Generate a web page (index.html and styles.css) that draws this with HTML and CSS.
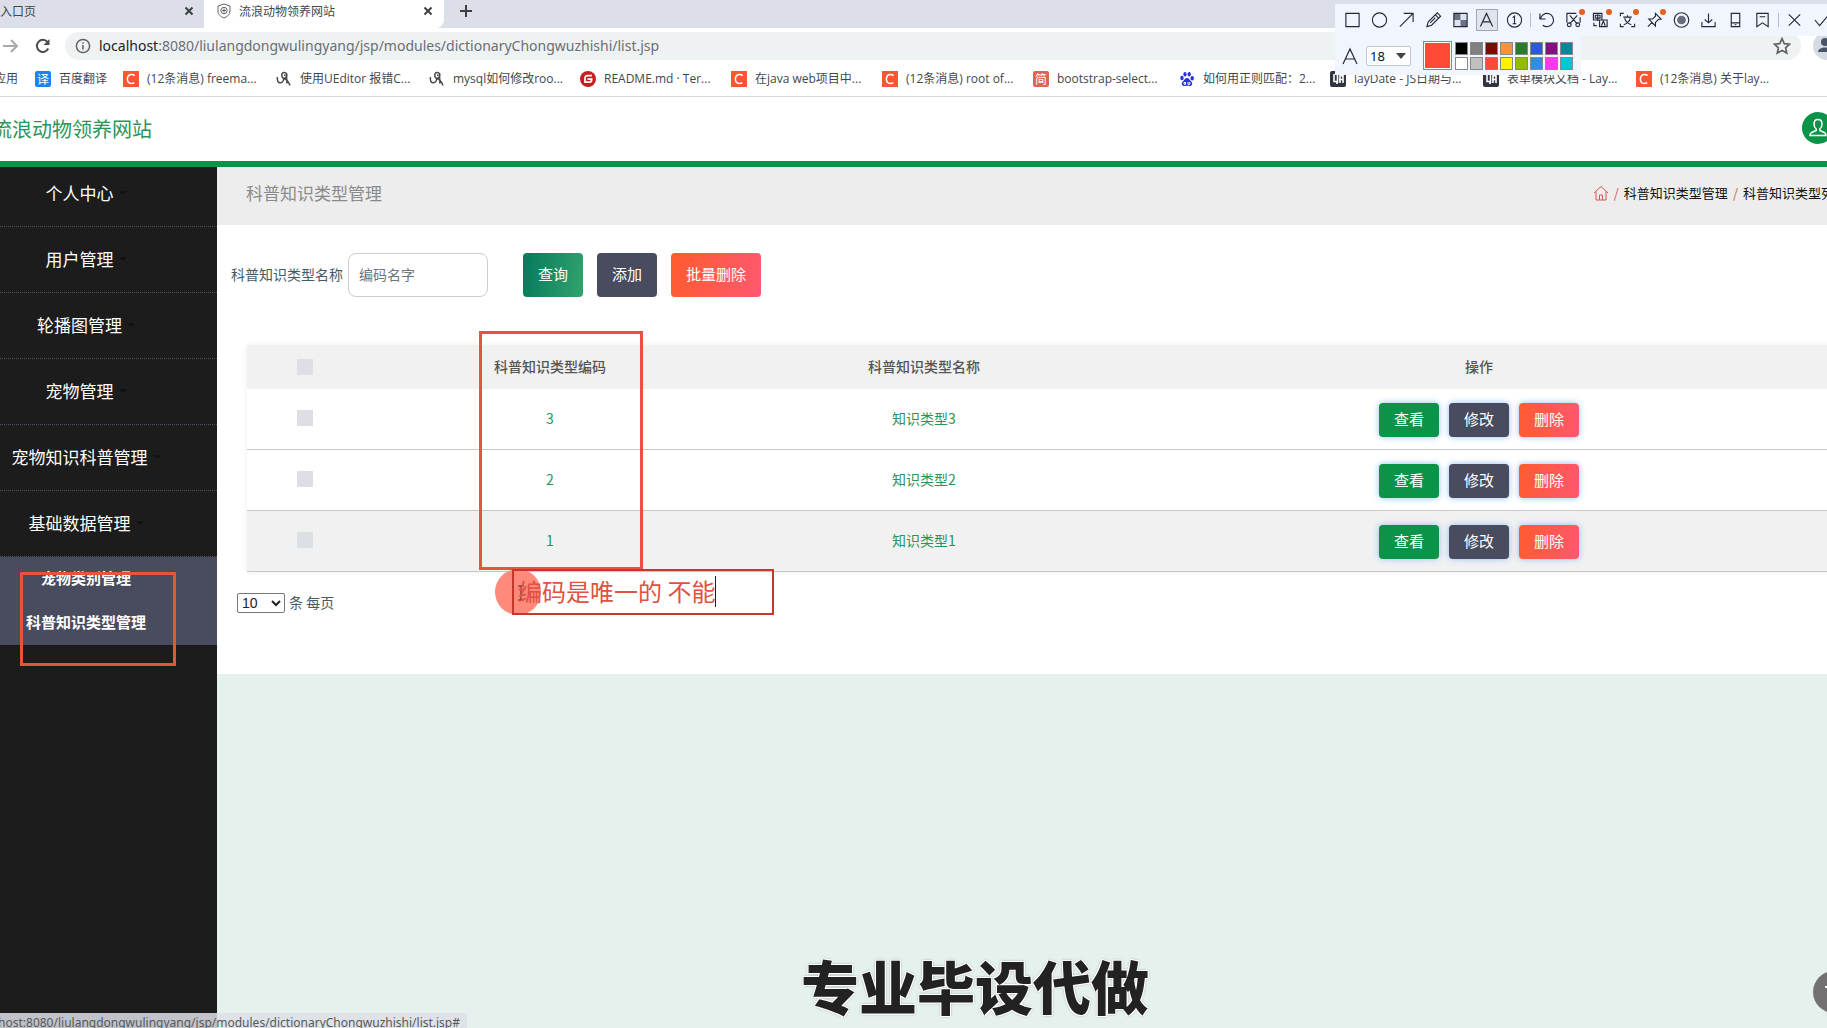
FILE: index.html
```html
<!DOCTYPE html>
<html lang="zh-CN">
<head>
<meta charset="utf-8">
<title>流浪动物领养网站</title>
<link rel="stylesheet" href="styles.css">
</head>
<body>
<svg class="defs" aria-hidden="true">
  <symbol id="csdn" viewBox="0 0 16 16"><rect width="16" height="16" fill="#fc5531"/><path d="M11.6 4.600C10.700 3.800 9.700 3.500 8.600 3.500 6 3.500 4.500 5.500 4.400 8.100c0 2.700 1.300 4.400 3.800 4.400 1.200 0 2.200-.3 3.100-.9" fill="none" stroke="#fff" stroke-width="1.500"/></symbol>
  <symbol id="cat" viewBox="0 0 16 16"><path d="M1.500 6c-.8 3.500.6 6 3 5.800 2.300-.2 3-1.800 3.200-4M7.300 7.500C5 6 5.200 1.800 8 1.500c2.600-.2 3.400 2 2.600 3.700-.5 1.200-1.800 2-3.300 2.300 3 .2 5 2.500 6.700 7M10.500 3l.4 9.500M8 4.200h1.500" fill="none" stroke="#4a4a4a" stroke-width="1.500"/></symbol>
  <symbol id="lay" viewBox="0 0 16 16"><rect width="16" height="16" rx="2" fill="#2f3440"/><path d="M4 3v7.500h3V13M7.500 4v8M10 12V5l3-.5V12M9 8.500h4" fill="none" stroke="#fff" stroke-width="1.600"/></symbol>
</svg>

<div class="tabs">
  <div class="tab tab-old"><span>入口页</span>
    <button class="x" aria-label="关闭标签页"><svg viewBox="0 0 10 10"><path d="M1.500 1.500l7 7M8.500 1.500l-7 7"/></svg></button></div>
  <div class="tab tab-on">
    <svg class="fav" viewBox="0 0 16 16"><path d="M8 1l6 2v5c0 3.500-2.500 5.500-6 7-3.500-1.500-6-3.500-6-7V3z"/><circle cx="8" cy="7.500" r="3.200"/><path d="M8 5.500v4M6 7.500h4"/></svg>
    <span>流浪动物领养网站</span>
    <button class="x" aria-label="关闭标签页"><svg viewBox="0 0 10 10"><path d="M1.500 1.500l7 7M8.500 1.500l-7 7"/></svg></button></div>
  <button class="plus" aria-label="新标签页"><svg viewBox="0 0 14 14"><path d="M7 1v12M1 7h12"/></svg></button>
</div>

<div class="address">
  <svg class="fwd" viewBox="0 0 16 16"><path d="M0 8h14M8 2l6 6-6 6"/></svg>
  <button class="reload" aria-label="重新加载"><svg viewBox="0 0 16 16"><path d="M13.300 10.500A6 6 0 1 1 12.500 4" fill="none" stroke="#4a4d51" stroke-width="2"/><path d="M14.500 1v6h-6z" fill="#4a4d51"/></svg></button>
  <div class="omni">
    <svg class="info" viewBox="0 0 16 16"><circle cx="8" cy="8" r="6.600"/><path d="M8 7v4.500M8 4.200v1.600"/></svg>
    <span><b>localhost</b>:8080/liulangdongwulingyang/jsp/modules/dictionaryChongwuzhishi/list.jsp</span>
    <svg class="star" viewBox="0 0 16 16"><path d="M8 1.500l2 4.400 4.700.5-3.500 3.200 1 4.700L8 11.900l-4.200 2.400 1-4.700L1.300 6.400 6 5.900z"/></svg>
  </div>
  <svg class="me" viewBox="0 0 28 28"><circle cx="14" cy="14" r="14" fill="#d6dae3"/><circle cx="12" cy="10" r="4" fill="#4a5568"/><path d="M5 20c0-6 14-6 14 0z" fill="#4a5568"/></svg>
</div>

<nav class="marks">
  <a class="m-app" href="#">应用</a>
  <a class="m-tr" href="#"><svg viewBox="0 0 16 16"><rect width="16" height="16" rx="2" fill="#1a84ee"/><text x="8" y="12.500" text-anchor="middle" font-size="12" fill="#fff">译</text></svg>百度翻译</a>
  <a class="wide" href="#"><svg><use href="#csdn"/></svg>(12条消息) freema...</a>
  <a class="wide" href="#"><svg><use href="#cat"/></svg>使用UEditor 报错C...</a>
  <a href="#"><svg><use href="#cat"/></svg>mysql如何修改roo...</a>
  <a href="#"><svg viewBox="0 0 16 16"><circle cx="8" cy="8" r="8" fill="#c71d23"/><path d="M12 4.700H7.500Q5 4.700 5 7.200v4h4.500q2.200 0 2.200-3H7.500" fill="none" stroke="#fff" stroke-width="1.700"/></svg>README.md · Ter...</a>
  <a href="#"><svg><use href="#csdn"/></svg>在java web项目中...</a>
  <a href="#"><svg><use href="#csdn"/></svg>(12条消息) root of...</a>
  <a class="narrow" href="#"><svg viewBox="0 0 16 16"><rect width="16" height="16" rx="2" fill="#e0654d"/><text x="8" y="12.500" text-anchor="middle" font-size="12" fill="#fff">简</text></svg>bootstrap-select...</a>
  <a href="#"><svg viewBox="0 0 16 16" fill="#2932e1"><ellipse cx="3" cy="7" rx="1.700" ry="2.200"/><ellipse cx="6" cy="3.200" rx="1.600" ry="2.300"/><ellipse cx="10.200" cy="3.200" rx="1.600" ry="2.300"/><ellipse cx="13.200" cy="7.200" rx="1.700" ry="2.200"/><path d="M8 7c2 0 2.800 2.200 4.200 3.500 2 2 .8 4.800-1.700 4.500-1.700-.3-3.300-.3-5 0-2.600.3-3.700-2.600-1.700-4.500C5.200 9.200 6 7 8 7z"/><path d="M6.500 11v2.300H5V11.500h1.500M9 11v2.300h1.800V11" fill="none" stroke="#fff"/></svg>如何用正则匹配：2...</a>
  <a class="wide" href="#"><svg><use href="#lay"/></svg>layDate - JS日期与...</a>
  <a class="wide" href="#"><svg><use href="#lay"/></svg>表单模块文档 - Lay...</a>
  <a href="#"><svg><use href="#csdn"/></svg>(12条消息) 关于lay...</a>
</nav>

<header class="site">
  <a class="brand" href="#">流浪动物领养网站</a>
  <button class="user" aria-label="用户"><svg viewBox="0 0 32 32"><path d="M16 7.500c-3 0-4 2-4 4.500 0 2 .8 4 2.200 5v1.500l-5 2.300c-1 .5-1.200 1.500-1.200 2.700h16c0-1.200-.2-2.200-1.200-2.700l-5-2.300V17c1.400-1 2.200-3 2.200-5 0-2.500-1-4.500-4-4.500z"/></svg></button>
</header>

<div class="app">
  <aside class="side">
    <ul class="menu">
      <li><a href="#">个人中心</a></li>
      <li><a href="#">用户管理</a></li>
      <li><a href="#">轮播图管理</a></li>
      <li><a href="#">宠物管理</a></li>
      <li><a href="#">宠物知识科普管理</a></li>
      <li><a href="#">基础数据管理</a></li>
    </ul>
    <ul class="sub">
      <li><a href="#">宠物类别管理</a></li>
      <li><a href="#">科普知识类型管理</a></li>
    </ul>
  </aside>

  <main class="main">
    <div class="crumbs">
      <h1>科普知识类型管理</h1>
      <div class="path">
        <svg viewBox="0 0 16 16"><path d="M1 8l7-6.500L15 8M3 6.500V15h10V6.500M6.500 15v-5h3v5"/></svg>
        <i>/</i><a href="#">科普知识类型管理</a><i>/</i><span>科普知识类型列表</span>
      </div>
    </div>

    <section class="panel">
      <form class="search">
        <label for="name">科普知识类型名称</label>
        <input id="name" type="text" placeholder="编码名字">
        <div class="acts">
          <button type="button" class="btn find">查询</button>
          <button type="button" class="btn dark">添加</button>
          <button type="button" class="btn red">批量删除</button>
        </div>
      </form>

      <table>
        <colgroup><col class="c1"><col class="c2"><col class="c3"><col class="c4"></colgroup>
        <thead>
          <tr><th><input type="checkbox" aria-label="全选"></th><th>科普知识类型编码</th><th>科普知识类型名称</th><th>操作</th></tr>
        </thead>
        <tbody>
          <tr><td><input type="checkbox" aria-label="选择 3"></td><td>3</td><td>知识类型3</td><td><div class="ops"><button class="btn green">查看</button><button class="btn dark">修改</button><button class="btn red">删除</button></div></td></tr>
          <tr><td><input type="checkbox" aria-label="选择 2"></td><td>2</td><td>知识类型2</td><td><div class="ops"><button class="btn green">查看</button><button class="btn dark">修改</button><button class="btn red">删除</button></div></td></tr>
          <tr class="hover"><td><input type="checkbox" aria-label="选择 1"></td><td>1</td><td>知识类型1</td><td><div class="ops"><button class="btn green">查看</button><button class="btn dark">修改</button><button class="btn red">删除</button></div></td></tr>
        </tbody>
      </table>

      <div class="pager">
        <select id="size"><option>10</option><option>25</option></select>
        <label for="size">条 每页</label>
      </div>
    </section>
  </main>
</div>

<div class="status">localhost:8080/liulangdongwulingyang/jsp/modules/dictionaryChongwuzhishi/list.jsp#</div>
<button class="top" aria-label="返回顶部"><svg viewBox="0 0 42 42"><path d="M12 16h18M21 20v12M15 26l6-6 6 6" fill="none" stroke="#fff" stroke-width="2"/></svg></button>
<div class="watermark">专业毕设代做</div>

<div class="mark mark-menu"></div>
<div class="mark mark-col"></div>
<div class="spot"><svg viewBox="0 0 8 16"><path d="M1 1h6M4 1v14M1 15h6" fill="none" stroke="#333"/></svg></div>
<div class="note">编码是唯一的 不能<span class="caret"></span></div>

<div class="tools">
  <div class="row1">
    <button aria-label="矩形"><svg viewBox="0 0 18 18"><path d="M2 2h14v14H2z"/></svg></button>
    <button aria-label="椭圆"><svg viewBox="0 0 18 18"><circle cx="9" cy="9" r="7.500"/></svg></button>
    <button aria-label="箭头"><svg viewBox="0 0 18 18"><path d="M2 16L16 2M6 2h10v9"/></svg></button>
    <button aria-label="画笔"><svg viewBox="0 0 18 18"><path d="M2 16l1.500-5L13 1.500l3.500 3.500L7 14.500zM11 3.500L14.500 7M5.500 12L11 6.500"/></svg></button>
    <button aria-label="马赛克"><svg viewBox="0 0 18 18"><g stroke="none"><path d="M9 2h7v7H9zM2 9h7v7H2z" fill="#dfe4ee"/><path d="M2 2h7v7H2zM9 9h7v7H9z" fill="#6b7384"/></g><path d="M2 2h14v14H2z"/></svg></button>
    <button class="on" aria-label="文字"><svg viewBox="0 0 18 18"><path d="M2.500 16L9 2l6.500 14M5 11h8"/></svg></button>
    <button aria-label="序号"><svg viewBox="0 0 18 18"><circle cx="9" cy="9" r="7.500"/><path d="M7 6.500L9 5v8M7 13h4"/></svg></button>
    <i></i>
    <button aria-label="撤销"><svg viewBox="0 0 18 18"><path d="M2 2v6h6M2.500 8A7 7 0 1 1 5 14.500"/></svg></button>
    <button class="dot" aria-label="截图"><svg viewBox="0 0 18 18"><path d="M2 6V2h10M16 6v6M2 5v7M5 4l8 9M13 4l-8 9"/><circle cx="4.500" cy="14" r="2"/><circle cx="13.500" cy="14" r="2"/></svg></button>
    <button class="dot" aria-label="翻译"><svg viewBox="0 0 18 18"><path d="M1.500 2h9v7h-9zM3.500 4h5v3h-5zM6 3v7M8 9h8v7H8zM10 15l2-5 2 5M2 12v3h3"/></svg></button>
    <button class="dot" aria-label="识别文字"><svg viewBox="0 0 18 18"><path d="M1.500 5V2H5M1.500 13v3H5M16.500 13v3H13M4.500 6h9M9 4v2M6 7c1 4 4 6 7 7M12 7c-1 4-4 6-7 7"/></svg></button>
    <button class="dot" aria-label="固定"><svg viewBox="0 0 18 18"><path d="M10 2l6 6-3 .5-3 3v4L3 8h4l3-3zM6.500 11.500L2 16"/></svg></button>
    <button aria-label="录屏"><svg viewBox="0 0 18 18"><circle cx="9" cy="9" r="7.700"/><circle cx="9" cy="9" r="4" fill="#666e7c" stroke="#666e7c"/></svg></button>
    <button aria-label="保存"><svg viewBox="0 0 18 18"><path d="M9 2v10M5 8.500L9 12l4-3.500M2 11v5h14v-5"/></svg></button>
    <button aria-label="手机"><svg viewBox="0 0 18 18"><path d="M4.500 2h9v14h-9zM4.500 12h9M8 14h2"/></svg></button>
    <button aria-label="收藏"><svg viewBox="0 0 18 18"><path d="M3 2h12v14l-6-4-6 4zM6 5.500h6"/></svg></button>
    <i></i>
    <button aria-label="取消"><svg viewBox="0 0 18 18"><path d="M3 3l12 12M15 3L3 15"/></svg></button>
    <button aria-label="完成"><svg viewBox="0 0 18 18"><path d="M2 9l5 6L17 3"/></svg></button>
  </div>
  <div class="row2">
    <svg class="bigA" viewBox="0 0 18 18"><path d="M2 17L9 2l7 15M4.500 12h9"/></svg>
    <div class="pick"><select aria-label="字号"><option>18</option></select><svg viewBox="0 0 10 6"><path d="M0 0h10L5 6z"/></svg></div>
    <span class="cur"></span>
    <div class="sw">
      <b style="background:#000"></b><b style="background:#808080"></b><b style="background:#7d0c00"></b><b style="background:#ff9237"></b><b style="background:#2b7a2b"></b><b style="background:#2f58d8"></b><b style="background:#850f80"></b><b style="background:#008996"></b>
      <b style="background:#fff"></b><b style="background:#c0c0c0"></b><b style="background:#ff4b36"></b><b style="background:#fff200"></b><b style="background:#93bb00"></b><b style="background:#2f8de4"></b><b style="background:#ff36f5"></b><b style="background:#00c6da"></b>
    </div>
  </div>
</div>
</body>
</html>
```
FILE: styles.css
```css
* { box-sizing: border-box; margin: 0; padding: 0; }
ul { list-style: none; }
a { color: inherit; text-decoration: none; }
i, b { font-style: normal; font-weight: normal; }
button { border: 0; background: none; font: inherit; color: inherit; }
svg { display: block; flex: none; }
.defs { position: absolute; width: 0; height: 0; }

body {
  position: relative;
  height: 100vh;
  overflow: hidden;
  display: flex;
  flex-direction: column;
  font: 14px/20px "Noto Sans CJK SC", sans-serif;
  background: #e5f1ed;
}

/* browser frame */
.tabs { flex: none; display: flex; height: 28px; background: #dcdfe7; font-size: 12px; color: #43474c; }
.tab { display: flex; align-items: center; height: 28px; padding-bottom: 6px; }
.tab span { flex: 1; }
.tab-old { width: 204px; padding-right: 7px; }
.tab-on { width: 240px; padding-left: 12px; padding-right: 8px; background: #fff; border-radius: 0 0 8px 0; }
.x { width: 16px; height: 16px; padding: 3px; }
.x svg, .plus svg { width: 100%; height: 100%; fill: none; stroke: #3c4043; stroke-width: 2; }
.fav { width: 16px; height: 16px; margin-right: 7px; fill: none; stroke: #5f6368; }
.plus { width: 14px; height: 14px; margin: 4px 0 0 15px; }

.address { flex: none; display: flex; align-items: center; height: 36px; background: #fff; overflow: hidden; }
.fwd { width: 16px; height: 16px; margin-left: 3px; fill: none; stroke: #a7a9ac; stroke-width: 2; }
.reload { width: 16px; height: 16px; margin: 0 14px 0 16px; }
.omni {
  flex: 1; display: flex; align-items: center; height: 28px; padding: 0 10px;
  background: #eff2f3; border-radius: 14px;
  font: 14px/20px "Noto Sans", sans-serif; color: #6a6e73;
}
.omni span { flex: 1; }
.omni b { color: #202124; }
.info { width: 16px; height: 16px; margin-right: 8px; fill: none; stroke: #5f6368; stroke-width: 1.500; }
.star { width: 18px; height: 18px; fill: none; stroke: #5f6368; stroke-width: 1.500; }
.me { width: 28px; height: 28px; margin: 0 -14px 0 12px; }

.marks {
  flex: none; display: flex; align-items: center; height: 33px; padding-bottom: 2px;
  background: #fff; border-bottom: 1px solid #d8d8d8;
  font: 12px/18px "Open Sans", "Noto Sans CJK SC", sans-serif; color: #43474c; white-space: nowrap; overflow: hidden;
}
.marks a { flex: none; display: flex; align-items: center; width: 151px; }
.marks svg { width: 16px; height: 16px; margin-right: 8px; }
.marks .m-app { width: 41px; margin-left: -6px; }
.marks .m-tr { width: 88px; }
.marks .wide { width: 153px; }
.marks .narrow { width: 146px; }

/* site header */
.site {
  flex: none; display: flex; align-items: center; justify-content: space-between;
  height: 70px; margin-right: -7px; border-bottom: 6px solid #0b9448; background: #fff;
}
.brand { margin-left: -8px; font-size: 20px; line-height: 28px; color: #2b9458; }
.user { width: 32px; height: 32px; margin-bottom: 2px; border-radius: 50%; background: #0b9448; }
.user svg { fill: none; stroke: #fff; stroke-width: 1.500; }

.app { flex: 1; display: flex; min-height: 0; }
.side { flex: none; width: 217px; background: #1c1c1c; color: #fff; }
.menu li { padding: 20px 45px 21px 0; border-bottom: 1px dotted #4a5160; }
.menu li:first-child { padding-top: 14px; }
.menu a { display: flex; align-items: center; justify-content: center; gap: 5px; font-size: 17px; line-height: 24px; }
.menu a::after { content: ""; border: 4px solid transparent; border-top-color: #111; border-bottom: 0; }
.sub { background: #484c5e; }
.sub a { display: block; padding: 11px 45px 13px 0; text-align: center; font-size: 15px; line-height: 20px; font-weight: bold; white-space: nowrap; }

.main { flex: 1; min-width: 0; }
.crumbs {
  display: flex; align-items: center; justify-content: space-between;
  height: 58px; padding: 0 0 6px 29px; margin-right: -20px; background: #ededed;
}
.crumbs h1 { font-size: 17px; line-height: 24px; font-weight: normal; color: #8a8a8a; }
.path { display: flex; align-items: center; gap: 5px; font-size: 13px; color: #111; }
.path i { color: #e0554a; }
.path svg { width: 16px; height: 16px; fill: none; stroke: #e0554a; }

.panel { background: #fff; padding: 28px 0 61px; }
.search { display: flex; align-items: center; padding-left: 14px; color: #455a64; }
.search label { padding-bottom: 2px; }
.search input {
  width: 140px; height: 44px; margin-left: 5px; padding: 0 10px 2px;
  border: 1px solid #ccc; border-radius: 8px; font: inherit; color: #555;
}
.search input::placeholder { color: #6f757b; }
.acts { display: flex; gap: 14px; margin-left: 35px; }
.btn { height: 34px; padding: 0 15px 2px; border-radius: 4px; font-size: 15px; line-height: 20px; color: #fff; }
.acts .btn { height: 44px; }
.find { background: linear-gradient(100deg, #047a5c, #33a26c); }
.green { background: #0b9448; }
.dark { background: #484c5e; }
.red { background: linear-gradient(100deg, #ff5b2e, #ff5870); }

table {
  width: calc(100% - 10px); margin: 48px 0 0 30px; table-layout: fixed;
  border-collapse: separate; border-spacing: 0; text-align: center; box-shadow: 0 0 6px #eee;
}
.c1 { width: 116px; }
.c2 { width: 374px; }
.c3 { width: 374px; }
th { height: 44px; padding-bottom: 2px; background: #f1f1f1; color: #555; font-weight: 500; }
td { height: 61px; padding-bottom: 2px; border-bottom: 1px solid #c8c8c8; color: #2b9458; }
td:last-child { padding: 1px 0 0; }
.hover { background: #f1f1f1; }
td input, th input { appearance: none; display: block; width: 16px; height: 16px; margin: 0 auto; background: #dcdfe3; }
th input { margin-top: 1px; }
.ops { display: flex; justify-content: center; gap: 10px; }
.ops .btn { box-shadow: 0 0 6px #8fbdf2; }

.pager { display: flex; align-items: center; gap: 4px; padding: 20px 0 0 20px; color: #455a64; }
.pager label { padding-bottom: 1px; }
.pager select { width: 48px; height: 20px; padding-bottom: 2px; font: 14px/16px "Liberation Sans", sans-serif; background: #fff; border: 1px solid #767676; border-radius: 2px; color: #222; }

/* floating items of the page */
.status {
  position: absolute; left: 0; bottom: 0; width: 467px; height: 15px;
  display: flex; justify-content: flex-end; padding-right: 7px; overflow: hidden;
  background: rgba(222, 225, 230, .85); border-radius: 0 4px 0 0; color: #55595e; white-space: nowrap;
  font: 12px/20px "Noto Sans", sans-serif;
}
.top { position: absolute; right: -28px; bottom: 15px; width: 42px; height: 42px; border-radius: 50%; background: #757173; }
.watermark {
  position: absolute; left: 0; right: 0; bottom: 0; padding-left: 123px; text-align: center;
  font-size: 58px; line-height: 86px; font-weight: 900; color: #222;
  text-shadow: 0 0 1px #fff, 1px 1px 0 #fff, -1px -1px 0 #fff, 1px -1px 0 #fff, -1px 1px 0 #fff, 0 0 3px #555;
}

/* screenshot annotations */
.mark { position: absolute; border: 3px solid #e9523f; }
.mark-menu { left: 20px; top: 572px; width: 156px; height: 94px; }
.mark-col { left: 479px; top: 331px; width: 164px; height: 239px; }
.spot { position: absolute; left: 495px; top: 569px; width: 46px; height: 46px; border-radius: 50%; background: #ff8a7c; }
.spot svg { position: absolute; left: 22px; top: 16px; width: 8px; height: 16px; }
.note {
  position: absolute; left: 512px; top: 569px; width: 262px; height: 46px; padding: 0 0 2px 4px;
  display: flex; align-items: center; border: 2px solid #c8382a;
  font-size: 24px; line-height: 36px; color: #e0513f; white-space: nowrap;
}
.caret { width: 1px; height: 31px; background: #222; }

.tools { position: absolute; top: 4px; right: 0; width: 492px; overflow: hidden; }
.tools svg { fill: none; stroke: #23283a; stroke-width: 1.200; }
.row1 { display: flex; align-items: center; height: 32px; padding-left: 4px; background: #f0f5fe; }
.row1 button { position: relative; flex: none; width: 27px; height: 22px; padding: 2px 5px; }
.row1 svg { width: 17px; height: 18px; }
.row1 .on { width: 22px; margin: 0 3px 0 2px; padding: 1px; border: 1px solid #a3a8b0; background: #e0e4ec; }
.row1 i { flex: none; width: 1px; height: 14px; margin: 0 2px; background: #b4b9c4; }
.dot::after { content: ""; position: absolute; right: 2px; top: 0; width: 6px; height: 6px; border-radius: 50%; background: #e5601d; }
.row2 { display: flex; align-items: center; width: 246px; height: 39px; padding-left: 6px; background: #f0f5fe; }
.bigA { width: 18px; height: 18px; }
.pick { position: relative; margin: 0 12px 0 7px; }
.pick select { appearance: none; display: block; width: 45px; height: 20px; padding-left: 3px; border: 1px solid #c2c6ce; border-radius: 2px; background: #fff; font: 13px/18px "Noto Sans", sans-serif; color: #111; }
.tools .pick svg { position: absolute; right: 5px; top: 7px; width: 10px; height: 6px; fill: #444; stroke: none; }
.cur { width: 29px; height: 29px; background: #ff4b36; border: 1px solid #888; outline: 1px solid #fff; outline-offset: -2px; }
.sw { display: grid; grid-template-columns: repeat(8, 13px); gap: 2px; margin-left: 3px; }
.sw b { height: 13px; border: 1px solid #888; }
```
